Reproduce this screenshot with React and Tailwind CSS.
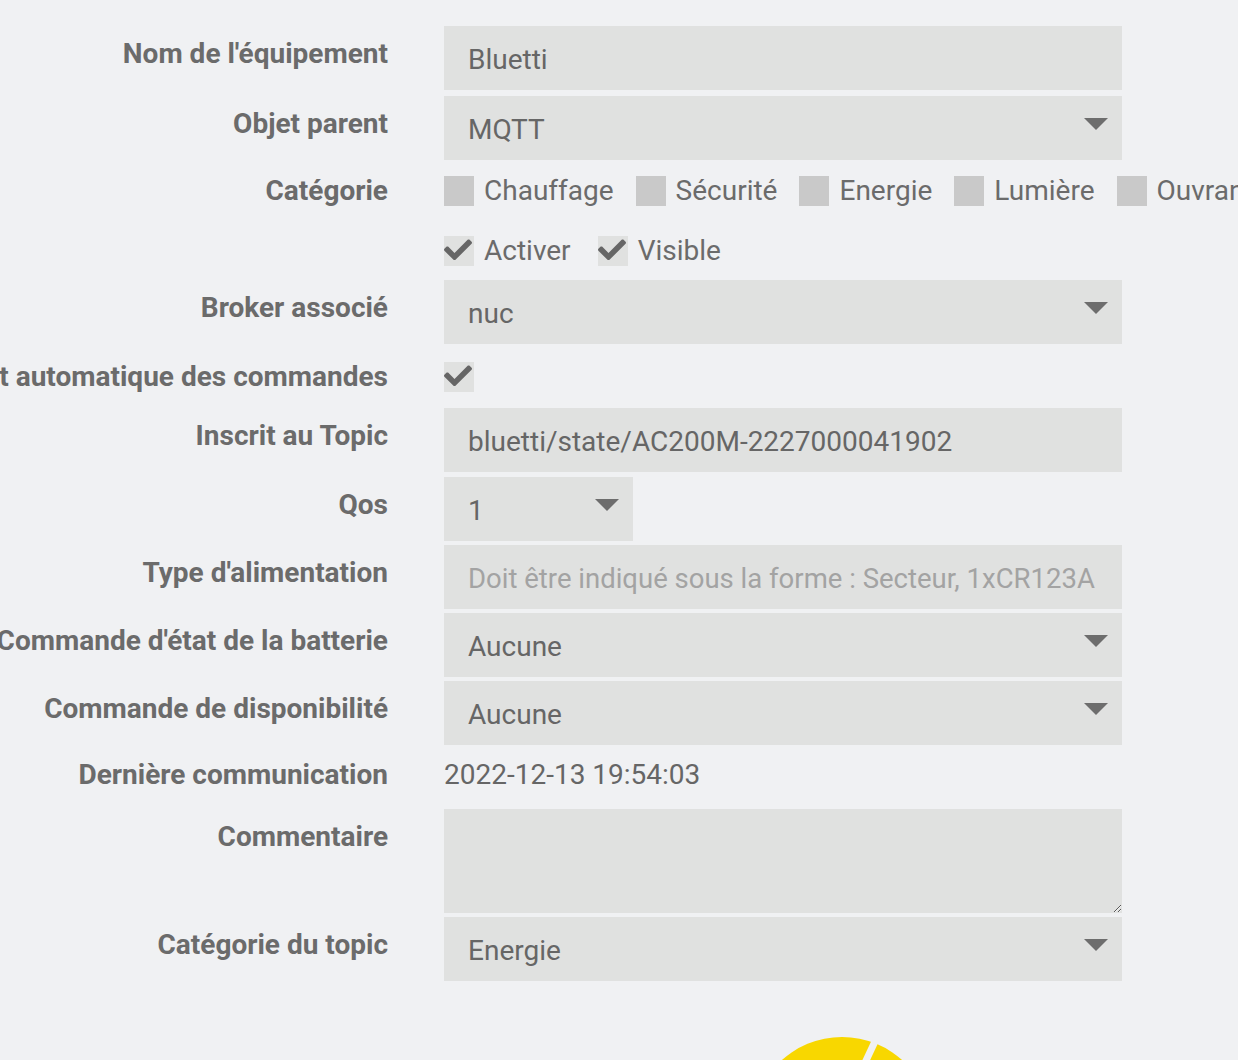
import React from 'react';

const Caret = () => (
  <svg width="24" height="12" viewBox="0 0 24 12" className="shrink-0 self-start mt-[18px]">
    <polygon points="0,0 24,0 12,12" fill="#6d6d6d" />
  </svg>
);

const Check = () => (
  <svg width="28" height="21" viewBox="0 0 512 380" className="absolute left-0 top-[3px]">
    <path
      fill="#666666"
      d="M173.898 359.404l-166.4-166.4c-9.997-9.997-9.997-26.206 0-36.204l36.203-36.204c9.997-9.998 26.207-9.998 36.204 0L192 232.69 432.095-7.404c9.997-9.997 26.207-9.997 36.204 0l36.203 36.204c9.997 9.997 9.997 26.206 0 36.204l-294.4 294.401c-9.998 9.997-26.207 9.997-36.204-.001z"
      transform="translate(0 20)"
    />
  </svg>
);

function Box({ checked, label }) {
  return (
    <div className="flex items-center shrink-0">
      <div className={`relative w-[30px] h-[30px] ${checked ? 'bg-[#e0e1e0]' : 'bg-[#c9c9c9]'}`}>
        {checked && <Check />}
      </div>
      {label && <span className="ml-[10px] text-[28px] leading-[30px] text-[#6b6b6b]">{label}</span>}
    </div>
  );
}

function Label({ children, center }) {
  return (
    <div className={`w-[388px] shrink-0 flex justify-end ${center ? '' : 'pt-[13px]'}`}>
      <span className="whitespace-nowrap font-bold text-[28px] leading-[30px] text-[#6b6b6b]">{children}</span>
    </div>
  );
}

function Field({ value, placeholder, select, width = 'w-[678px]' }) {
  return (
    <div className={`${width} h-[64px] bg-[#e0e1e0] flex items-center justify-between pl-[24px] pr-[14px] pt-[4px]`}>
      {value ? (
        <span className="text-[28px] leading-[32px] text-[#666666] whitespace-nowrap">{value}</span>
      ) : (
        <span className="text-[27.5px] leading-[32px] text-[#a3a3a3] whitespace-nowrap">{placeholder}</span>
      )}
      {select && <Caret />}
    </div>
  );
}

function Row({ label, children, className = '', center }) {
  return (
    <div className={`flex gap-[56px] ${center ? 'items-center' : 'items-start'} ${className}`}>
      <Label center={center}>{label}</Label>
      {children}
    </div>
  );
}

export default function App() {
  return (
    <div className="h-[1060px] w-full overflow-hidden bg-[#f0f1f3]" style={{ fontFamily: 'Roboto, "Liberation Sans", sans-serif' }}>
      <div className="pt-[26px]">
        <Row label="Nom de l'équipement">
          <Field value="Bluetti" />
        </Row>
        <Row label="Objet parent" className="mt-[6px]">
          <Field value="MQTT" select />
        </Row>
        <Row label="Catégorie" className="mt-[16px]" center>
          <div className="flex items-center gap-[22px] h-[30px]">
            <Box label="Chauffage" />
            <Box label="Sécurité" />
            <Box label="Energie" />
            <Box label="Lumière" />
            <Box label="Ouvrant" />
            <Box label="Automatisme" />
          </div>
        </Row>
        <Row label="" className="mt-[30px]" center>
          <div className="flex items-center gap-[27px] h-[30px]">
            <Box checked label="Activer" />
            <Box checked label="Visible" />
          </div>
        </Row>
        <Row label="Broker associé" className="mt-[14px]">
          <Field value="nuc" select />
        </Row>
        <Row label="Ajout automatique des commandes" className="mt-[18px]" center>
          <Box checked />
        </Row>
        <Row label="Inscrit au Topic" className="mt-[16px]">
          <Field value="bluetti/state/AC200M-2227000041902" />
        </Row>
        <Row label="Qos" className="mt-[5px]">
          <Field value="1" select width="w-[189px]" />
        </Row>
        <Row label="Type d'alimentation" className="mt-[4px]">
          <Field placeholder="Doit être indiqué sous la forme : Secteur, 1xCR123A" />
        </Row>
        <Row label="Commande d'état de la batterie" className="mt-[4px]">
          <Field value="Aucune" select />
        </Row>
        <Row label="Commande de disponibilité" className="mt-[4px]">
          <Field value="Aucune" select />
        </Row>
        <Row label="Dernière communication" className="h-[60px]" center>
          <span className="text-[28px] leading-[30px] text-[#666666]">2022-12-13 19:54:03</span>
        </Row>
        <Row label="Commentaire" className="mt-[4px]">
          <textarea className="w-[678px] h-[104px] bg-[#e0e1e0] outline-none block" />
        </Row>
        <Row label="Catégorie du topic" className="mt-[4px]">
          <Field value="Energie" select />
        </Row>
        <div className="mt-[56px] ml-[752px]">
          <svg width="180" height="180" viewBox="0 0 180 180">
            <circle cx="90" cy="90" r="90" fill="#f8d700" />
            <line x1="126" y1="-2" x2="111" y2="30" stroke="#f0f1f3" strokeWidth="7" />
          </svg>
        </div>
      </div>
    </div>
  );
}
